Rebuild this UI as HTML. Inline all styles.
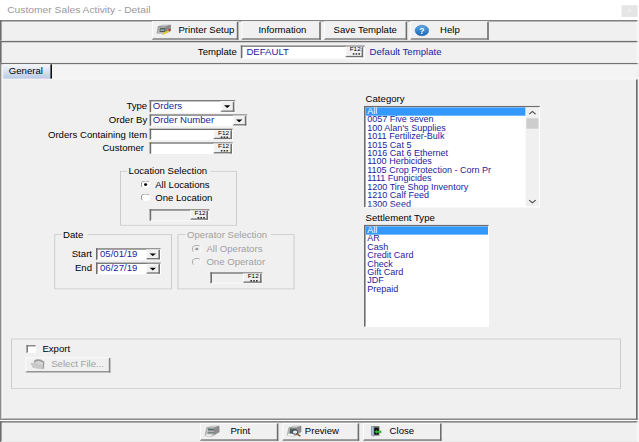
<!DOCTYPE html>
<html><head><meta charset="utf-8">
<style>
html,body{margin:0;padding:0}
body{width:639px;height:442px;overflow:hidden;background:#f0f0f0;position:relative}
#s{position:absolute;left:0;top:0;width:799px;height:680px;transform:scale(0.8,0.65);transform-origin:0 0;background:#f0f0f0;font-family:"Liberation Sans",sans-serif;font-size:12px;color:#000;overflow:hidden}
#s div{position:absolute;box-sizing:border-box;white-space:nowrap}
.t{line-height:14px;height:14px;font-size:13.5px;transform:scaleX(.889);transform-origin:0 0}
.r{text-align:right}
.t.r{transform-origin:100% 0}
.b{color:#1c1c9c}
.g{color:#a0a0a0}
.panel{border-top:2px solid #6d6d6d;border-left:2px solid #6d6d6d;border-bottom:1px solid #e6e6e6;border-right:1px solid #fff}
.btn{border-top:1px solid #fff;border-left:1px solid #fff;border-bottom:2px solid #6d6d6d;border-right:2px solid #6d6d6d;background:#f0f0f0}
.inp{border-top:2px solid #6d6d6d;border-left:2px solid #6d6d6d;border-bottom:1px solid #fff;border-right:1px solid #fff;background:#fff}
.inp.dis{background:#f0f0f0}
.cmb{border-top:2px solid #6d6d6d;border-left:2px solid #6d6d6d;border-bottom:1px solid #fff;border-right:1px solid #fff;background:#fff}
.grp{border:1px solid #c4c4c4}
.gl{background:#f0f0f0;padding:0 5px 0 2px;line-height:14px;font-size:13.5px;transform:scaleX(.889);transform-origin:0 0}
.f12{background:#f0f0f0;border-top:1px solid #fff;border-left:1px solid #fff;border-bottom:2px solid #707070;border-right:2px solid #707070;font-size:8px;line-height:8px;text-align:center;color:#000;padding-left:3px}
.f12:after{content:"";position:absolute;left:8px;top:8.5px;width:2px;height:2px;background:#111;box-shadow:3.5px 0 0 #111,7px 0 0 #111}
.dd{background:#f0f0f0;border-top:1px solid #fff;border-left:1px solid #fff;border-bottom:2px solid #707070;border-right:2px solid #707070}
.dd:after{content:"";position:absolute;left:50%;top:50%;margin:-1.5px 0 0 -4px;border-left:4px solid transparent;border-right:4px solid transparent;border-top:4px solid #000}
.rad{width:12px;height:12px;border-radius:50%;background:#fff;border:1.5px solid #6a6a6a;border-bottom-color:#fdfdfd;border-right-color:#fdfdfd;transform:rotate(0deg)}
.rad.on:after{content:"";position:absolute;left:2.5px;top:2.5px;width:4px;height:4px;border-radius:50%;background:#000}
.rad.dis{background:#f0f0f0;border-color:#9a9a9a;border-bottom-color:#fff;border-right-color:#fff}
.rad.dis.on:after{background:#9a9a9a}
.list{border-top:2px solid #6d6d6d;border-left:2px solid #6d6d6d;border-bottom:1px solid #fff;border-right:1px solid #fff;background:#fff;overflow:hidden}
.li{left:2px;height:13px;line-height:11px;font-size:13.5px;color:#1c1c9c;transform:scaleX(0.837);transform-origin:0 0}
.li.sel{color:#fff}
.selbg{left:0;top:0;height:13px;background:#3399ff}
</style></head><body><div id="s">
<!-- title bar -->
<div style="left:0;top:0;width:799px;height:31px;background:#fff"></div>
<div class="t" style="left:9px;top:7px;color:#999;font-size:14px;line-height:16px;height:16px;transform:scaleX(0.917)">Customer Sales Activity - Detail</div>
<div style="left:777px;top:8px;width:20px;height:18px;background:#e5e5e5;color:#f6f6f6;font-size:9px;line-height:17px;text-align:center">x</div>

<!-- toolbar 1 -->
<div class="panel" style="left:0;top:31px;width:797px;height:32px"></div>
<div class="btn" style="left:190px;top:33px;width:108px;height:28px"></div>
<svg style="position:absolute;left:187.5px;top:30.77px" width="37.5" height="30.77" viewBox="0 0 639 426" preserveAspectRatio="none">
<polygon points="170,135 270,105 430,105 335,140" fill="#dcdcdc" stroke="#777" stroke-width="8"/>
<polygon points="165,140 335,140 335,270 260,300 140,290" fill="#b8b8b8" stroke="#6a6a6a" stroke-width="10"/>
<polygon points="335,140 430,108 430,230 335,272" fill="#8a8a8a" stroke="#6a6a6a" stroke-width="8"/>
<polygon points="200,165 320,165 320,255 195,255" fill="#4e5e5c"/>
<polygon points="215,200 300,200 300,228 212,228" fill="#b4bcbc"/>
<polygon points="205,160 240,160 240,175 205,175" fill="#5a9a5a"/>
<polygon points="140,283 255,290 245,322 128,300" fill="#fafafa"/>
<line x1="268" y1="295" x2="392" y2="232" stroke="#e6cf1e" stroke-width="36"/>
<polygon points="378,188 432,196 424,228 386,222" fill="#c22e2e"/>
</svg>
<div class="t" style="left:223px;top:39.7px">Printer Setup</div>
<div class="btn" style="left:302px;top:33px;width:99px;height:28px"></div>
<div class="t" style="left:323px;top:39.7px">Information</div>
<div class="btn" style="left:405px;top:33px;width:104px;height:28px"></div>
<div class="t" style="left:417px;top:39.7px">Save Template</div>
<div class="btn" style="left:513px;top:33px;width:98px;height:28px"></div>
<svg style="position:absolute;left:510px;top:30.77px" width="75" height="30.77" viewBox="0 0 639 213" preserveAspectRatio="none">
<defs><linearGradient id="hg" x1="0" y1="0" x2="0" y2="1"><stop offset="0" stop-color="#5aa8e8"/><stop offset="1" stop-color="#1c66b8"/></linearGradient></defs>
<ellipse cx="148" cy="110" rx="72" ry="56" fill="url(#hg)" stroke="#2a6cb0" stroke-width="6"/>
<text x="148" y="143" font-family="Liberation Sans, sans-serif" font-weight="bold" font-size="92" fill="#fff" text-anchor="middle">?</text>
</svg>
<div class="t" style="left:550px;top:39.7px">Help</div>

<!-- toolbar 2 -->
<div class="panel" style="left:0;top:63px;width:797px;height:34px"></div>
<div class="t r" style="left:198px;width:98px;top:73px">Template</div>
<div class="inp" style="left:301px;top:70px;width:155px;height:20px"></div>
<div class="t b" style="left:308px;top:73px">DEFAULT</div>
<div class="f12" style="left:432px;top:72px;width:22px;height:16px">F12</div>
<div class="t b" style="left:462px;top:73px">Default Template</div>

<!-- tab control -->
<div style="left:0;top:97px;width:797px;height:549px;border-top:2px solid #6d6d6d;border-left:2px solid #8c8c8c;border-bottom:2px solid #6d6d6d"></div>
<div style="left:795px;top:122px;width:2px;height:524px;background:#6d6d6d"></div>
<div style="left:2px;top:99px;width:1px;height:545px;background:#fff"></div>
<div style="left:3px;top:99px;width:794px;height:22px;background:#f4f4f4"></div>
<div style="left:3px;top:121px;width:794px;height:1px;background:#fff"></div>
<div style="left:4px;top:99px;width:59px;height:22px;background:linear-gradient(#f6f8fc,#b7cbe5)"></div>
<div style="left:63px;top:99px;width:2px;height:22px;background:#111"></div>
<div class="t" style="left:11px;top:103.2px">General</div>

<!-- form fields -->
<div class="t r" style="left:40px;width:144px;top:156px">Type</div>
<div class="cmb" style="left:187px;top:154px;width:107px;height:18.5px"></div>
<div class="t b" style="left:191px;top:156px">Orders</div>
<div class="dd" style="left:276px;top:156px;width:17px;height:15.5px"></div>

<div class="t r" style="left:40px;width:144px;top:178px">Order By</div>
<div class="cmb" style="left:187px;top:176px;width:122px;height:18px"></div>
<div class="t b" style="left:191px;top:178px">Order Number</div>
<div class="dd" style="left:291px;top:178px;width:17px;height:15px"></div>

<div class="t r" style="left:40px;width:144px;top:201px">Orders Containing Item</div>
<div class="inp" style="left:187px;top:198px;width:104px;height:17px"></div>
<div class="f12" style="left:267px;top:200px;width:23px;height:14px">F12</div>

<div class="t r" style="left:40px;width:140px;top:221px">Customer</div>
<div class="inp" style="left:187px;top:219px;width:104px;height:18px"></div>
<div class="f12" style="left:267px;top:221px;width:23px;height:15px">F12</div>

<!-- location group -->
<div class="grp" style="left:150px;top:263px;width:146px;height:84px"></div>
<div class="gl" style="left:159px;top:257px">Location Selection</div>
<div class="rad on" style="left:176px;top:278px"></div>
<div class="t" style="left:194px;top:278px">All Locations</div>
<div class="rad" style="left:176px;top:298px"></div>
<div class="t" style="left:194px;top:298px">One Location</div>
<div class="inp dis" style="left:187px;top:322px;width:75px;height:18px"></div>
<div class="f12" style="left:238px;top:324px;width:22px;height:14px">F12</div>

<!-- date group -->
<div class="grp" style="left:68px;top:360px;width:147px;height:85px"></div>
<div class="gl" style="left:77px;top:355px">Date</div>
<div class="t r" style="left:60px;width:55px;top:384px">Start</div>
<div class="cmb" style="left:120px;top:382px;width:81px;height:18px"></div>
<div class="t b" style="left:125px;top:384px">05/01/19</div>
<div class="dd" style="left:183px;top:384px;width:17px;height:15px"></div>
<div class="t r" style="left:60px;width:55px;top:406px">End</div>
<div class="cmb" style="left:120px;top:404px;width:81px;height:18px"></div>
<div class="t b" style="left:125px;top:406px">06/27/19</div>
<div class="dd" style="left:183px;top:406px;width:17px;height:15px"></div>

<!-- operator group -->
<div class="grp" style="left:222px;top:360px;width:146px;height:85px"></div>
<div class="gl g" style="left:232px;top:355px">Operator Selection</div>
<div class="rad on dis" style="left:240px;top:377px"></div>
<div class="t g" style="left:258px;top:376px">All Operators</div>
<div class="rad dis" style="left:240px;top:397px"></div>
<div class="t g" style="left:258px;top:396px">One Operator</div>
<div class="inp dis" style="left:263px;top:419px;width:65px;height:17px"></div>
<div class="f12" style="left:304px;top:421px;width:23px;height:14px">F12</div>

<!-- category -->
<div class="t" style="left:457px;top:146px">Category</div>
<div class="list" style="left:455px;top:163px;width:220px;height:156px">
<div class="selbg" style="width:200px"></div><div class="li sel" style="top:0">All</div>
<div class="li" style="top:13px">0057 Five seven</div>
<div class="li" style="top:26px">100 Alan's Supplies</div>
<div class="li" style="top:39px">1011 Fertilizer-Bulk</div>
<div class="li" style="top:52px">1015 Cat 5</div>
<div class="li" style="top:65px">1016 Cat 6 Ethernet</div>
<div class="li" style="top:78px">1100 Herbicides</div>
<div class="li" style="top:91px">1105 Crop Protection - Corn Pr</div>
<div class="li" style="top:104px">1111 Fungicides</div>
<div class="li" style="top:117px">1200 Tire Shop Inventory</div>
<div class="li" style="top:130px">1210 Calf Feed</div>
<div class="li" style="top:143px">1300 Seed</div>
<div style="left:200px;top:0;width:17px;height:152px;background:#f0f0f0"></div>
<div style="left:201px;top:17px;width:15px;height:16px;background:#cdcdcd"></div>
<svg style="position:absolute;left:200px;top:0" width="17" height="152" viewBox="0 0 17 152"><path d="M4.5 10.5 L8.5 6.5 L12.5 10.5" fill="none" stroke="#505050" stroke-width="1.6"/><path d="M4.5 143 L8.5 147 L12.5 143" fill="none" stroke="#505050" stroke-width="1.6"/></svg>
</div>

<!-- settlement -->
<div class="t" style="left:457px;top:329px">Settlement Type</div>
<div class="list" style="left:455px;top:346px;width:156px;height:157px">
<div class="selbg" style="width:153px"></div><div class="li sel" style="top:0">All</div>
<div class="li" style="top:13px">AR</div>
<div class="li" style="top:26px">Cash</div>
<div class="li" style="top:39px">Credit Card</div>
<div class="li" style="top:52px">Check</div>
<div class="li" style="top:65px">Gift Card</div>
<div class="li" style="top:78px">JDF</div>
<div class="li" style="top:91px">Prepaid</div>
</div>

<!-- export -->
<div class="grp" style="left:14px;top:521px;width:762px;height:77px"></div>
<div class="inp" style="left:33px;top:531px;width:12px;height:12px;border-top-color:#7a7a7a;border-left-color:#7a7a7a"></div>
<div class="t" style="left:53px;top:530px">Export</div>
<div class="btn" style="left:32px;top:550px;width:106px;height:22.5px;border-bottom-color:#858585;border-right-color:#858585"></div>
<svg style="position:absolute;left:30px;top:544.6px" width="37.5" height="33.85" viewBox="0 0 603 442" preserveAspectRatio="none">
<polygon points="205,130 260,105 330,110 405,150 395,290 215,260" fill="#9c9c9c" stroke="#8a8a8a" stroke-width="8"/>
<polygon points="225,150 300,135 385,165 375,250 230,220" fill="#d6d6d6"/>
<polygon points="125,180 220,165 300,200 380,215 375,300 180,275" fill="#c8c8c8"/>
</svg>
<div class="t g" style="left:64px;top:554px">Select File...</div>

<!-- bottom panel -->
<div style="left:0;top:646px;width:797px;height:2px;background:#fff"></div>
<div class="panel" style="left:0;top:648px;width:797px;height:32px"></div>
<div class="btn" style="left:250px;top:651px;width:98px;height:27px"></div>
<svg style="position:absolute;left:250px;top:646.15px" width="37.5" height="33.85" viewBox="0 0 603 442" preserveAspectRatio="none">
<polygon points="135,160 235,125 385,125 290,160" fill="#e2e2e2" stroke="#8a8a8a" stroke-width="8"/>
<polygon points="135,160 290,160 290,300 235,330 100,318" fill="#c4c4c4" stroke="#7a7a7a" stroke-width="9"/>
<polygon points="290,160 385,128 385,245 290,300" fill="#8c8c8c" stroke="#707070" stroke-width="8"/>
<polygon points="165,178 282,178 282,215 160,215" fill="#566472"/>
<polygon points="172,165 205,165 205,180 172,180" fill="#5a9a5a"/>
<polygon points="158,238 282,238 282,272 152,272" fill="#76847c"/>
<polygon points="120,288 245,292 232,332 100,318" fill="#fbfbfb" stroke="#a0a0a0" stroke-width="5"/>
</svg>
<div class="t" style="left:288px;top:656px">Print</div>
<div class="btn" style="left:353px;top:651px;width:96px;height:27px"></div>
<svg style="position:absolute;left:352.5px;top:646.15px" width="37.5" height="33.85" viewBox="0 0 603 442" preserveAspectRatio="none">
<polygon points="130,160 230,125 375,125 285,160" fill="#e2e2e2" stroke="#8a8a8a" stroke-width="8"/>
<polygon points="130,160 285,160 285,300 230,325 95,312" fill="#c4c4c4" stroke="#7a7a7a" stroke-width="9"/>
<polygon points="285,160 375,128 375,240 285,300" fill="#8c8c8c" stroke="#707070" stroke-width="8"/>
<polygon points="150,175 280,175 280,275 145,275" fill="#4e5e5c"/>
<polygon points="165,160 195,160 195,176 165,176" fill="#5a9a5a"/>
<polygon points="115,285 235,290 225,325 95,312" fill="#fbfbfb"/>
<line x1="290" y1="280" x2="352" y2="322" stroke="#8a5a28" stroke-width="30" stroke-linecap="round"/>
<ellipse cx="255" cy="245" rx="52" ry="42" fill="#e4eefa" stroke="#303840" stroke-width="16"/>
</svg>
<div class="t" style="left:381px;top:656px">Preview</div>
<div class="btn" style="left:454px;top:651px;width:98px;height:27px"></div>
<svg style="position:absolute;left:453.75px;top:646.15px" width="37.5" height="33.85" viewBox="0 0 603 442" preserveAspectRatio="none">
<rect x="165" y="125" width="162" height="192" fill="#7c7c7c"/>
<rect x="220" y="155" width="92" height="140" fill="#101010"/>
<polygon points="165,125 215,150 215,335 165,300" fill="#a9c4dc" stroke="#6a7a8a" stroke-width="8"/>
<polygon points="225,240 280,200 280,222 365,215 365,262 280,258 280,280" fill="#36b436"/>
</svg>
<div class="t" style="left:487px;top:656px">Close</div>
</div></body></html>
